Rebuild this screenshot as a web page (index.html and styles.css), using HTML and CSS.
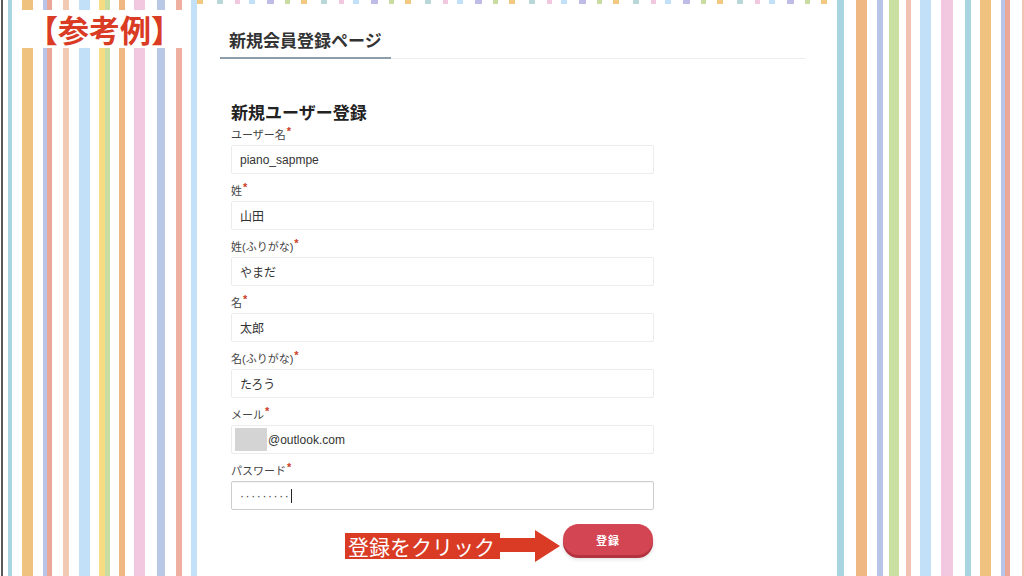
FILE: index.html
```html
<!DOCTYPE html>
<html lang="ja">
<head>
<meta charset="utf-8">
<title>新規会員登録ページ</title>
<link rel="stylesheet" href="styles.css">
</head>
<body>
<div class="stripes-left"></div>
<main class="panel">
  <div class="topband"></div>
  <div class="content">
    <div class="page-head"><h1>新規会員登録ページ</h1></div>
    <section class="form">
      <h2 class="form-title">新規ユーザー登録</h2>
      <div class="field">
        <div class="label">ユーザー名<span class="req">*</span></div>
        <div class="input">piano_sapmpe</div>
      </div>
      <div class="field">
        <div class="label">姓<span class="req">*</span></div>
        <div class="input">山田</div>
      </div>
      <div class="field">
        <div class="label">姓(ふりがな)<span class="req">*</span></div>
        <div class="input">やまだ</div>
      </div>
      <div class="field">
        <div class="label">名<span class="req">*</span></div>
        <div class="input">太郎</div>
      </div>
      <div class="field">
        <div class="label">名(ふりがな)<span class="req">*</span></div>
        <div class="input">たろう</div>
      </div>
      <div class="field">
        <div class="label">メール<span class="req">*</span></div>
        <div class="input input-mail"><span class="mask"></span>@outlook.com</div>
      </div>
      <div class="field">
        <div class="label">パスワード<span class="req">*</span></div>
        <div class="input input-focus"><span class="dots">·········</span><span class="caret"></span></div>
      </div>
      <div class="actions">
        <div class="note">
          <span class="note-text">登録をクリック</span>
          <svg class="note-arrow" width="60" height="32" viewBox="0 0 60 32"><rect x="0" y="8" width="36" height="14" fill="#d93b25"/><polygon points="35,0 60,16 35,32" fill="#d93b25"/></svg>
        </div>
        <button class="submit">登録</button>
      </div>
    </section>
  </div>
</main>
<div class="stripes-right"></div>
<div class="sample-tag">【参考例】</div>
</body>
</html>
```

FILE: styles.css
```css
html, body {
  margin: 0;
  padding: 0;
}
body {
  width: 1024px;
  height: 576px;
  overflow: hidden;
  display: flex;
  position: relative;
  background: #fff;
  font-family: "Liberation Sans", "Noto Sans CJK JP", sans-serif;
  color: #333;
}
.stripes-left {
  width: 197px;
  flex: none;
  background: linear-gradient(to right,
    #fff 0 1px, #5a5a5a 1px 3px, #fff 3px 8px,
    #a9d5e1 8px 12px, #fff 12px 22px,
    #efc37f 22px 33px, #fff 33px 43px,
    #b8c4e8 43px 47px, #e9a898 47px 52px, #fff 52px 63px,
    #f2c9b2 63px 69px, #fff 69px 79px,
    #c2e0f8 79px 90px, #fff 90px 99px,
    #f5dc82 99px 105px, #c9dda2 105px 110px, #fff 110px 119px,
    #efb882 119px 125px, #fff 125px 134px,
    #f1c8e0 134px 145px, #fff 145px 157px,
    #b9c9e5 157px 165px, #fff 165px 176px,
    #efb0a2 176px 182px, #fff 182px 191px,
    #c2e0f8 191px 197px);
}
.stripes-right {
  width: 187px;
  flex: none;
  background: linear-gradient(to right,
    #a9d5e1 0 7px, #fff 7px 19px,
    #efb882 19px 30px, #fff 30px 40px,
    #b8c4e8 40px 46px, #fff 46px 52px,
    #c9e0a2 52px 62px, #fff 62px 69px,
    #f2c2b2 69px 74px, #fff 74px 83px,
    #c2e0f8 83px 94px, #fff 94px 104px,
    #f1c8e0 104px 116px, #fff 116px 128px,
    #a9d5e1 128px 134px, #fff 134px 143px,
    #efc37f 143px 154px, #fff 154px 164px,
    #b8c4e8 164px 168px, #e9a898 168px 173px, #fff 173px 185px,
    #f2c2b2 185px 187px);
}
.panel {
  width: 640px;
  flex: none;
  display: flex;
  flex-direction: column;
  background: #fff;
}
.topband {
  height: 4px;
  flex: none;
  background: repeating-linear-gradient(to right,
    #f0c880 0 6px, #fff 6px 20px,
    #b8d8d8 20px 26px, #fff 26px 38px,
    #f1c8e0 38px 43px, #fff 43px 52px,
    #c2e0f8 52px 58px, #fff 58px 70px,
    #c0bce8 70px 77px, #fff 77px 88px,
    #c9dda2 88px 93px, #fff 93px 104px);
}
.content {
  padding: 0 32px 0 23px;
}
.page-head {
  margin-top: 27px;
  display: flex;
  border-bottom: 1px solid #ececec;
}
.page-head h1 {
  margin: 0 0 -1px;
  padding: 0 9px 4px;
  font-size: 17px;
  line-height: 22px;
  font-weight: bold;
  color: #333;
  border-bottom: 2px solid #8d9dab;
}
.form {
  margin-left: 11px;
  width: 423px;
}
.form-title {
  margin: 43px 0 1px;
  font-size: 17px;
  line-height: 24px;
  font-weight: bold;
  color: #222;
}
.field {
  margin-bottom: 9px;
}
.label {
  height: 16px;
  font-size: 11px;
  line-height: 16px;
  color: #444;
  margin-bottom: 2px;
  white-space: nowrap;
}
.req {
  position: relative;
  top: -4px;
  color: #cc3d1f;
  font-size: 11px;
  font-weight: bold;
  margin-left: 1px;
}
.input {
  height: 29px;
  box-sizing: border-box;
  border: 1px solid #ececec;
  border-radius: 2px;
  padding: 0 8px;
  display: flex;
  align-items: center;
  font-size: 12px;
  color: #333;
  background: #fff;
}
.input-mail {
  padding-left: 3px;
}
.mask {
  width: 32px;
  height: 23px;
  background: #d4d4d4;
  margin-right: 1px;
}
.input-focus {
  border-color: #cdcdcd;
  box-shadow: inset 0 1px 1px rgba(0,0,0,0.04);
}
.dots {
  letter-spacing: 1.6px;
  color: #444;
}
.caret {
  width: 1px;
  height: 14px;
  background: #222;
  margin-left: 1px;
}
.actions {
  display: flex;
  justify-content: flex-end;
  align-items: flex-start;
  margin-top: 14px;
  padding-right: 1px;
}
.note {
  display: flex;
  align-items: center;
  margin-top: 6px;
  margin-right: 3px;
}
.note-text {
  background: #d93b25;
  color: #fff;
  font-family: "Noto Sans CJK JP", sans-serif;
  font-size: 21px;
  line-height: 26px;
  padding: 0 5px 0 3px;
}
.note-arrow {
  display: block;
}
.submit {
  width: 90px;
  height: 31px;
  border: none;
  border-radius: 16px;
  background: #d34553;
  color: #fff;
  font-family: "Noto Sans CJK JP", sans-serif;
  font-size: 11px;
  font-weight: bold;
  letter-spacing: 1px;
  box-shadow: 0 3px 0 #b2323f, 0 4px 4px rgba(0,0,0,0.15);
  padding: 0;
}
.sample-tag {
  position: absolute;
  left: 16px;
  top: 10px;
  width: 171px;
  height: 38px;
  box-sizing: border-box;
  padding-left: 11px;
  background: #fff;
  color: #d93b25;
  font-family: "Noto Sans CJK JP", sans-serif;
  font-size: 31px;
  font-weight: bold;
  line-height: 38px;
  white-space: nowrap;
}
```
